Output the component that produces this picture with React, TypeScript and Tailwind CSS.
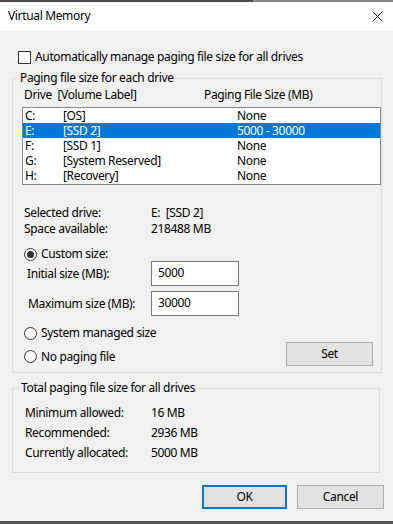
import React from "react";

const drives = [
  { letter: "C:", label: "[OS]", size: "None" },
  { letter: "E:", label: "[SSD 2]", size: "5000 - 30000", selected: true },
  { letter: "F:", label: "[SSD 1]", size: "None" },
  { letter: "G:", label: "[System Reserved]", size: "None" },
  { letter: "H:", label: "[Recovery]", size: "None" },
];

function Radio({ checked, label }: { checked?: boolean; label: string }) {
  return (
    <div className="flex items-center h-[16px]">
      <span className="w-[13px] h-[13px] rounded-full border border-[#333] bg-white flex items-center justify-center">
        {checked && <span className="w-[7px] h-[7px] rounded-full bg-[#333]" />}
      </span>
      <span className="ml-[4px]">{label}</span>
    </div>
  );
}

function Button({ children, primary, className }: { children: React.ReactNode; primary?: boolean; className?: string }) {
  return (
    <button
      className={`h-[24px] bg-[#e1e1e1] flex items-center justify-center ${
        primary ? "border-2 border-[#0078d7]" : "border border-[#adadad]"
      } ${className ?? ""}`}
    >
      {children}
    </button>
  );
}

export default function App() {
  return (
    <div
      className="w-[393px] h-[524px] bg-[#f0f0f0] flex flex-col text-[12px] leading-[16px] tracking-[-0.35px] text-black overflow-hidden"
      style={{ fontFamily: '"Noto Sans", "Open Sans", sans-serif' }}
    >
      {/* window chrome top edge */}
      <div className="flex h-[2px] shrink-0">
        <div className="w-[253px] bg-[#4a4a4a]" />
        <div className="flex-1 bg-[#8a8a8a]" />
      </div>

      {/* title bar */}
      <div className="h-[29px] bg-white flex items-center justify-between pl-[8px] pr-[10px] shrink-0">
        <span className="mt-[-1px]">Virtual Memory</span>
        <svg width="11" height="11" viewBox="0 0 11 11">
          <path d="M0.5 0.5 L10.5 10.5 M10.5 0.5 L0.5 10.5" stroke="#111" strokeWidth="1" />
        </svg>
      </div>

      <div className="flex-1 px-[12px] flex flex-col">
        {/* auto manage */}
        <div className="flex items-center mt-[18px] ml-[6px] h-[16px]">
          <span className="w-[13px] h-[13px] border border-[#333] bg-white" />
          <span className="ml-[4px]">Automatically manage paging file size for all drives</span>
        </div>

        {/* group: paging file size for each drive */}
        <fieldset className="mt-[5px] border border-[#dcdcdc] w-[369px] h-[303px] px-0">
          <legend className="ml-[5px] px-[2px]">Paging file size for each drive</legend>

          <div className="pl-[9px]">
            <div className="flex mt-[1px] h-[16px]">
              <span className="w-[182px] pl-[2px]">Drive&nbsp;&nbsp;[Volume Label]</span>
              <span>Paging File Size (MB)</span>
            </div>

            <div className="mt-[4px] h-[78px] w-[359px] border border-[#828790] bg-white">
              {drives.map((d) => (
                <div
                  key={d.letter}
                  className={`flex items-center h-[15px] leading-[15px] pl-[2px] ${d.selected ? "bg-[#0078d7] text-white" : ""}`}
                >
                  <span className="w-[38px]">{d.letter}</span>
                  <span className="w-[174px]">{d.label}</span>
                  <span>{d.size}</span>
                </div>
              ))}
            </div>

            <div className="mt-[20px] grid grid-cols-[127px_1fr] pl-[2px]">
              <span>Selected drive:</span>
              <span>E:&nbsp;&nbsp;[SSD 2]</span>
              <span>Space available:</span>
              <span>218488 MB</span>
            </div>

            <div className="mt-[9px] ml-[2px]">
              <Radio checked label="Custom size:" />
            </div>

            <div className="flex items-center h-[25px] mt-[-1px]">
              <span className="w-[129px] pl-[5px]">Initial size (MB):</span>
              <div className="w-[88px] h-[25px] border border-[#7a7a7a] bg-white flex items-center pl-[6px] pb-[2px]">5000</div>
            </div>

            <div className="flex items-center h-[25px] mt-[5px]">
              <span className="w-[129px] pl-[6px]">Maximum size (MB):</span>
              <div className="w-[88px] h-[25px] border border-[#7a7a7a] bg-white flex items-center pl-[6px] pb-[2px]">30000</div>
            </div>

            <div className="mt-[9px] ml-[2px]">
              <Radio label="System managed size" />
            </div>

            <div className="flex items-center justify-between mt-[1px] pr-[8px]">
              <div className="ml-[2px] mt-[5px]">
                <Radio label="No paging file" />
              </div>
              <Button className="w-[87px]">Set</Button>
            </div>
          </div>
        </fieldset>

        {/* group: totals */}
        <fieldset className="mt-[7px] border border-[#dcdcdc] w-[368px] h-[93px] px-0">
          <legend className="ml-[6px] px-[2px]">Total paging file size for all drives</legend>
          <div className="pl-[12px] mt-[9px] grid grid-cols-[126px_1fr] gap-y-[4px]">
            <span>Minimum allowed:</span>
            <span>16 MB</span>
            <span>Recommended:</span>
            <span>2936 MB</span>
            <span>Currently allocated:</span>
            <span>5000 MB</span>
          </div>
        </fieldset>

        <div className="flex justify-end gap-[10px] mt-[12px] mr-[-3px]">
          <Button primary className="w-[85px]">OK</Button>
          <Button className="w-[87px]">Cancel</Button>
        </div>
      </div>

      <div className="h-[3px] bg-[#555] shrink-0" />
    </div>
  );
}
